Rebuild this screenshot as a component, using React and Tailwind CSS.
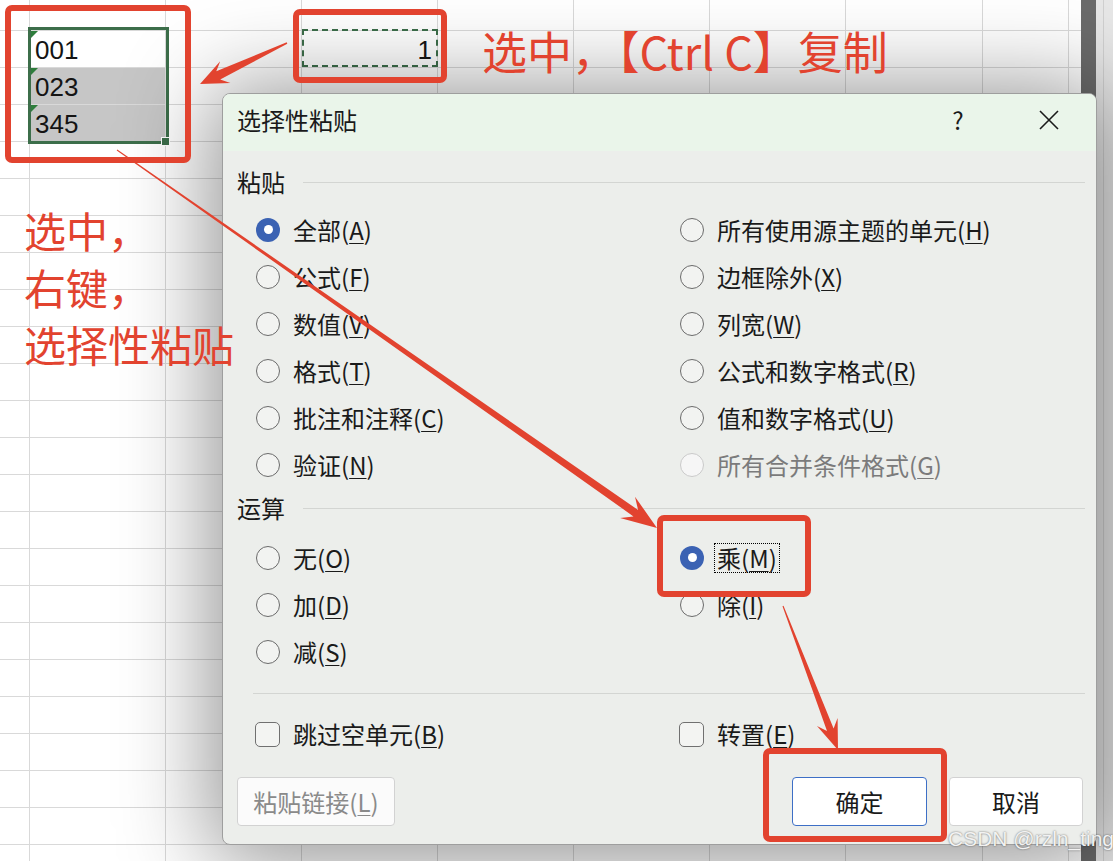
import React from 'react';

const RED = '#e2432f';
const CJK = { fontFamily: '"Noto Sans CJK SC", "Noto Sans", sans-serif' };

// column widths of the sheet behind the dialog
const colWidths = [30, 136, 136, 136, 136, 136, 136, 137, 86, 12];
const rowCount = 23;

// tapered arrow polygon: thin tail, thick shaft end, barbed head
function arrowPoints(x1, y1, x2, y2, w0, w1, hl, hw) {
    const dx = x2 - x1;
    const dy = y2 - y1;
    const len = Math.hypot(dx, dy);
    const ux = dx / len;
    const uy = dy / len;
    const nx = -uy;
    const ny = ux;
    const bx = x2 - ux * hl;
    const by = y2 - uy * hl;
    const sx = x2 - ux * hl * 0.72;
    const sy = y2 - uy * hl * 0.72;
    const pts = [
        [x1 + nx * w0, y1 + ny * w0],
        [sx + nx * w1, sy + ny * w1],
        [bx + nx * hw, by + ny * hw],
        [x2, y2],
        [bx - nx * hw, by - ny * hw],
        [sx - nx * w1, sy - ny * w1],
        [x1 - nx * w0, y1 - ny * w0]
    ];
    return pts.map((p) => p.map((v) => v.toFixed(1)).join(',')).join(' ');
}

const cellContent = (r, c) => {
    if (c === 1 && r === 1) return { text: '001', bg: 'bg-white', mark: true };
    if (c === 1 && r === 2) return { text: '023', bg: 'bg-[#c6c6c6]', mark: true };
    if (c === 1 && r === 3) return { text: '345', bg: 'bg-[#c6c6c6]', mark: true };
    if (c === 3 && r === 1) return { text: '1', bg: 'bg-white', right: true };
    return null;
};

const Sheet = () => (
    <div className="flex flex-col w-[1081px] bg-white" style={{ fontFamily: '"Liberation Sans", Arial, sans-serif' }}>
        {Array.from({ length: rowCount + 1 }).map((_, r) => (
            <div key={r} className={`flex shrink-0 ${r === 0 ? 'h-[31px]' : 'h-[37px]'}`}>
                {colWidths.map((w, c) => {
                    const cell = r > 0 ? cellContent(r, c) : null;
                    const last = c === colWidths.length - 1;
                    return (
                        <div
                            key={c}
                            className={`relative h-full border-b border-[#d9d9d9] ${last ? '' : 'border-r'} ${cell ? cell.bg : ''} flex items-center ${cell && cell.right ? 'justify-end pr-[5px]' : 'pl-[5px]'}`}
                            style={{ width: w }}
                        >
                            {cell && cell.mark && (
                                <span className="absolute top-0 left-0 w-0 h-0 border-t-[8px] border-r-[8px] border-t-[#2e7d3c] border-r-transparent" />
                            )}
                            {cell && <span className="text-[26px] leading-none text-[#141414] pt-[2px]">{cell.text}</span>}
                        </div>
                    );
                })}
            </div>
        ))}
    </div>
);

const Radio = ({ checked, disabled }) =>
    checked ? (
        <span className="w-6 h-6 shrink-0 rounded-full bg-[#3b62b3] flex items-center justify-center">
            <span className="w-[9px] h-[9px] rounded-full bg-white" />
        </span>
    ) : (
        <span
            className={`w-6 h-6 shrink-0 rounded-full border-[1.5px] ${
                disabled ? 'border-[#cacaca] bg-[#f6f6f6]' : 'border-[#6b6b6b] bg-[#f2f3f1]'
            }`}
        />
    );

const Label = ({ text, keyChar, disabled, focus }) => (
    <span
        className={`text-[24px] leading-none ${disabled ? 'text-[#7b7b7b]' : 'text-[#1a1a1a]'} ${
            focus ? 'outline outline-1 outline-dotted outline-black outline-offset-[2px]' : ''
        }`}
    >
        {text}(<span className="underline underline-offset-[3px] decoration-1">{keyChar}</span>)
    </span>
);

const RadioItem = ({ text, k, checked, disabled, focus }) => (
    <div className="flex items-center h-[47px] gap-[13px]">
        <Radio checked={checked} disabled={disabled} />
        <Label text={text} keyChar={k} disabled={disabled} focus={focus} />
    </div>
);

const SectionHeader = ({ title, h }) => (
    <div className={`flex items-center pl-[14px] ${h}`}>
        <span className="text-[24px] leading-none text-[#1a1a1a]">{title}</span>
        <div className="flex-1 h-px bg-[#d3d5d2] ml-[18px] mr-[11px]" />
    </div>
);

const Checkbox = ({ text, k }) => (
    <div className="flex items-center h-[48px] gap-[13px]">
        <span className="w-[25px] h-[25px] shrink-0 rounded-[5px] border-[1.5px] border-[#707070] bg-[#f3f4f2]" />
        <Label text={text} keyChar={k} />
    </div>
);

const pasteLeft = [
    { t: '全部', k: 'A', checked: true },
    { t: '公式', k: 'F' },
    { t: '数值', k: 'V' },
    { t: '格式', k: 'T' },
    { t: '批注和注释', k: 'C' },
    { t: '验证', k: 'N' }
];
const pasteRight = [
    { t: '所有使用源主题的单元', k: 'H' },
    { t: '边框除外', k: 'X' },
    { t: '列宽', k: 'W' },
    { t: '公式和数字格式', k: 'R' },
    { t: '值和数字格式', k: 'U' },
    { t: '所有合并条件格式', k: 'G', disabled: true }
];

const Dialog = () => (
    <div
        className="absolute left-[222px] top-[93px] w-[875px] h-[752px] rounded-[8px] border border-[#9e9e9e] bg-[#eceeeb] overflow-hidden flex flex-col shadow-[0_6px_90px_12px_rgba(0,0,0,0.42)]"
        style={CJK}
    >
        {/* Title bar */}
        <div className="flex items-center h-[57px] shrink-0 bg-[#eaf5ea] pl-[14px] pb-[6px]">
            <span className="flex-1 text-[24px] leading-none text-[#1a1a1a]">选择性粘贴</span>
            <span className="w-[60px] text-center text-[24px] leading-none text-[#1a1a1a]">?</span>
            <span className="w-[60px] ml-[31px] mr-[17px] flex justify-center">
                <svg width="22" height="22" viewBox="0 0 22 22">
                    <path d="M2 2 L20 20 M20 2 L2 20" stroke="#1a1a1a" strokeWidth="1.6" />
                </svg>
            </span>
        </div>

        {/* Body */}
        <div className="flex flex-col pt-[7px]">
            <SectionHeader title="粘贴" h="h-[48px]" />
            <div className="grid grid-cols-[424px_1fr] pl-[33px]">
                <div className="flex flex-col">
                    {pasteLeft.map((o) => (
                        <RadioItem key={o.k} text={o.t} k={o.k} checked={o.checked} />
                    ))}
                </div>
                <div className="flex flex-col">
                    {pasteRight.map((o) => (
                        <RadioItem key={o.k} text={o.t} k={o.k} disabled={o.disabled} />
                    ))}
                </div>
            </div>

            <SectionHeader title="运算" h="h-[46px] pb-[6px]" />
            <div className="grid grid-cols-[424px_1fr] pl-[33px]">
                <div className="flex flex-col">
                    <RadioItem text="无" k="O" />
                    <RadioItem text="加" k="D" />
                    <RadioItem text="减" k="S" />
                </div>
                <div className="flex flex-col">
                    <RadioItem text="乘" k="M" checked focus />
                    <RadioItem text="除" k="I" />
                </div>
            </div>

            <div className="h-px bg-[#d3d5d2] ml-[30px] mr-[11px] mt-[18px]" />

            <div className="grid grid-cols-[424px_1fr] pl-[32px] mt-[16px]">
                <Checkbox text="跳过空单元" k="B" />
                <Checkbox text="转置" k="E" />
            </div>

            <div className="flex items-center mt-[19px] pl-[14px] pr-[13px]">
                <button className="w-[158px] h-[49px] rounded-[4px] border border-[#d2d2d2] bg-[#fbfbfb] text-[24px] leading-none text-[#8a8a8a]">
                    粘贴链接(<span className="underline underline-offset-[3px] decoration-1">L</span>)
                </button>
                <div className="flex-1" />
                <button className="w-[135px] h-[49px] rounded-[4px] border border-[#3d6fc6] bg-white text-[24px] leading-none text-[#1a1a1a]">
                    确定
                </button>
                <button className="w-[134px] h-[49px] ml-[22px] rounded-[4px] border border-[#d2d2d2] bg-white text-[24px] leading-none text-[#1a1a1a]">
                    取消
                </button>
            </div>
        </div>
    </div>
);

const App = () => {
    return (
        <div className="relative w-[1113px] h-[861px] overflow-hidden bg-white flex">
            <Sheet />
            {/* scrollbar strip */}
            <div className="w-[15px] h-full bg-[#6b6b6b]" />
            <div className="flex-1 h-full bg-[#e7e7e7] flex">
                <div className="w-[7px] h-full" />
                <div className="w-px h-full bg-[#d0d0d0]" />
            </div>

            {/* selection + copy marquee */}
            <div className="absolute left-[28px] top-[27px] w-[141px] h-[117px] border-[3px] border-[#3c6e4a]" />
            <div className="absolute left-[161px] top-[137px] w-[9px] h-[9px] bg-[#3c6e4a] border border-white" />
            <div className="absolute left-[302px] top-[29px] w-[136px] h-[38px] border-2 border-dashed border-[#3c6e4a]" />

            <Dialog />

            {/* annotations */}
            <div
                className="absolute left-[482px] top-[28px] text-[45px] leading-none whitespace-nowrap"
                style={{ ...CJK, color: RED }}
            >
                选中，【Ctrl C】复制
            </div>
            <div
                className="absolute left-[24px] top-[201px] text-[42px] leading-[57px] whitespace-nowrap"
                style={{ ...CJK, color: RED }}
            >
                <div>选中，</div>
                <div>右键，</div>
                <div>选择性粘贴</div>
            </div>

            <div className="absolute left-[5px] top-[5px] w-[186px] h-[158px] border-[6px] rounded-[7px] border-[#e2432f]" />
            <div className="absolute left-[293px] top-[9px] w-[154px] h-[74px] border-[6px] rounded-[7px] border-[#e2432f]" />
            <div className="absolute left-[657px] top-[515px] w-[154px] h-[82px] border-[6px] rounded-[7px] border-[#e2432f]" />
            <div className="absolute left-[763px] top-[748px] w-[184px] h-[94px] border-[6px] rounded-[7px] border-[#e2432f]" />

            <svg className="absolute left-0 top-0" width="1113" height="861" viewBox="0 0 1113 861">
                <polygon points={arrowPoints(287, 43, 200, 84, 0.8, 4.5, 28, 12)} fill={RED} />
                <polygon points={arrowPoints(117, 150, 657, 528, 0.5, 4, 36, 13)} fill={RED} />
                <polygon points={arrowPoints(783, 606, 838, 750, 0.5, 3.5, 30, 11)} fill={RED} />
            </svg>

            <div
                className="absolute left-[948px] top-[828px] text-[21px] leading-none text-[#f2f2f2] whitespace-nowrap [text-shadow:0_0_2px_rgba(0,0,0,0.6)]"
                style={{ fontFamily: '"Liberation Sans", Arial, sans-serif' }}
            >
                CSDN @rzln_ting
            </div>
        </div>
    );
};

export default App;
